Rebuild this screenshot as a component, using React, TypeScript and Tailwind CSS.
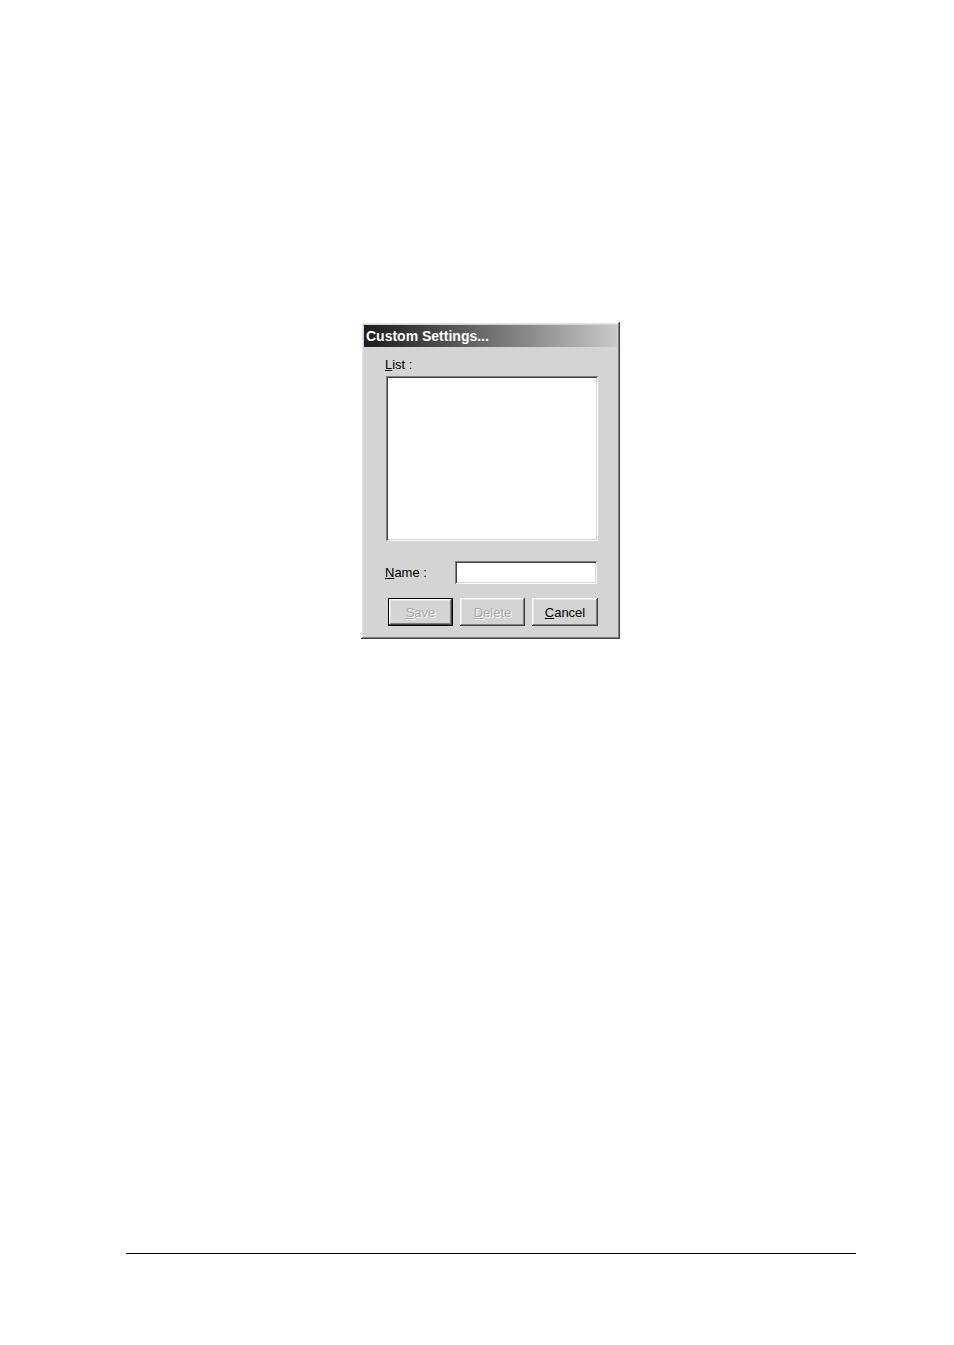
import React from "react";

const raised =
  "shadow-[inset_-1px_-1px_0_#404040,inset_1px_1px_0_#ffffff,inset_-2px_-2px_0_#808080,inset_2px_2px_0_#e4e4e4]";
const sunken =
  "shadow-[inset_1px_1px_0_#808080,inset_-1px_-1px_0_#ffffff,inset_2px_2px_0_#404040,inset_-2px_-2px_0_#d4d4d4]";

function Button({ label, disabled, isDefault }: { label: string; disabled?: boolean; isDefault?: boolean }) {
  const [first, ...rest] = label.split("");
  return (
    <div
      className={`flex h-[28px] items-center justify-center bg-[#d4d4d4] ${
        isDefault ? "border border-black" : ""
      } ${label === "Cancel" ? "w-[66px]" : "w-[65px]"}`}
    >
      <div className={`flex h-full w-full items-center justify-center ${raised}`}>
        <span
          className={`text-[13px] leading-none ${
            disabled ? "text-[#a8a8a8] [text-shadow:1px_1px_0_#ffffff]" : "text-black"
          }`}
        >
          <span className="underline">{first}</span>
          {rest.join("")}
        </span>
      </div>
    </div>
  );
}

export default function App() {
  return (
    <div className="min-h-[1345px] w-full bg-white pt-[322px] font-['Liberation_Sans',Arial,sans-serif]">
      {/* Dialog */}
      <div className={`ml-[361px] h-[317px] w-[259px] bg-[#d4d4d4] p-[3px] ${raised}`}>
        <div className="flex h-[22px] items-center bg-gradient-to-r from-[#1c1c1c] via-[#707070] to-[#cacaca] pl-[2px] text-[14px] font-bold text-white">
          Custom Settings...
        </div>
        <div className="pl-[21px] pt-[10px]">
          <div className="h-[16px] text-[13px] leading-[16px] text-black">
            <span className="underline">L</span>ist :
          </div>
          <div className={`ml-[1px] mt-[3px] h-[165px] w-[212px] bg-white ${sunken}`} />
          <div className="mt-[20px] flex h-[23px] items-center">
            <div className="w-[70px] text-[13px] text-black">
              <span className="underline">N</span>ame :
            </div>
            <div className={`h-[23px] w-[142px] bg-white ${sunken}`} />
          </div>
          <div className="ml-[3px] mt-[14px] flex gap-[7px]">
            <Button label="Save" disabled isDefault />
            <Button label="Delete" disabled />
            <Button label="Cancel" />
          </div>
        </div>
      </div>
      {/* Footer rule */}
      <div className="ml-[126px] mt-[614px] h-px w-[730px] bg-black" />
    </div>
  );
}
